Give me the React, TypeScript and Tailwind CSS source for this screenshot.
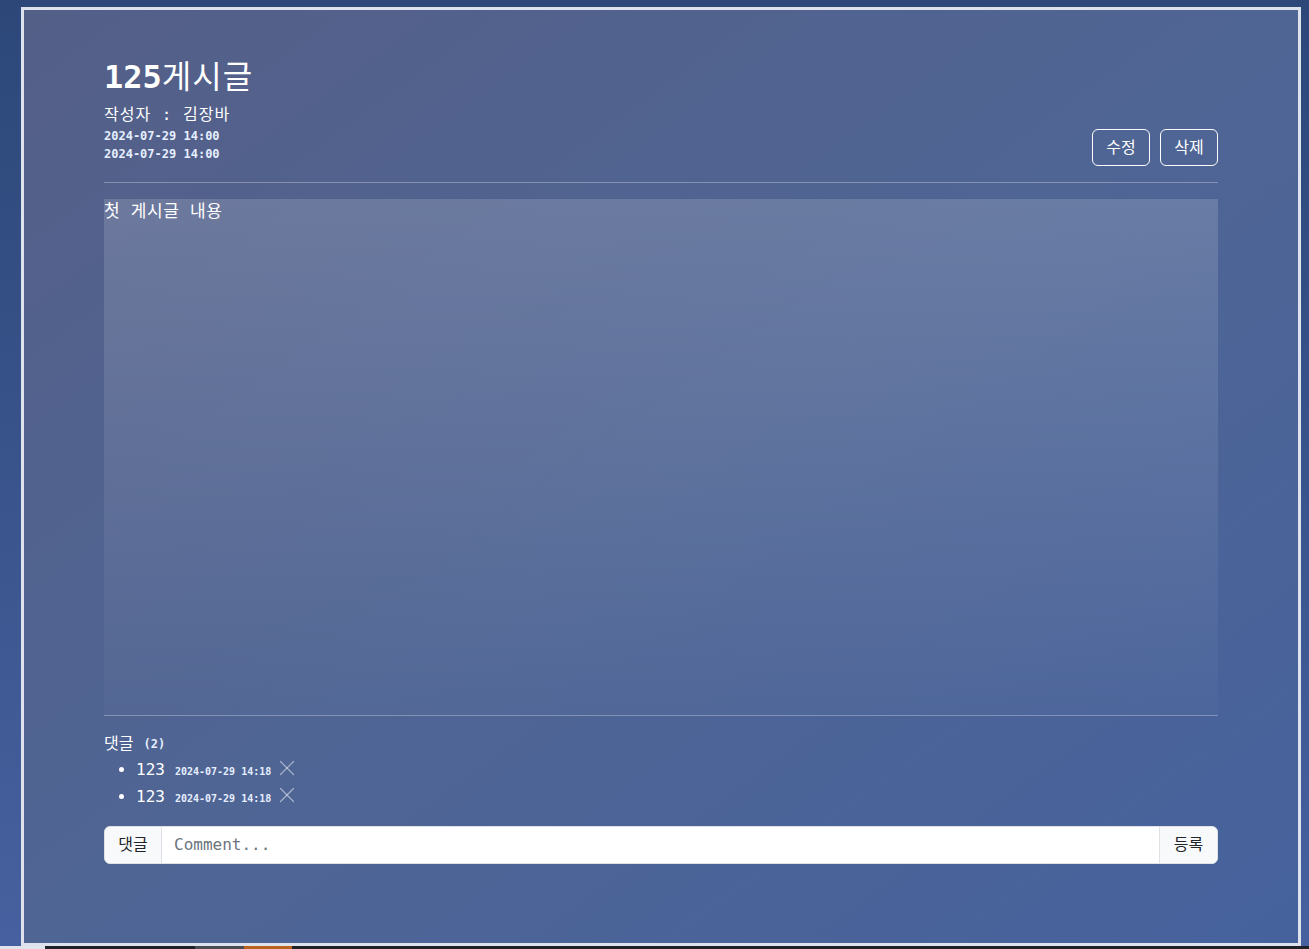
import { X } from "lucide-react";

const mono = "font-['DejaVu_Sans_Mono','Noto_Sans_CJK_KR',monospace]";

const comments = [
  { id: 1, body: "123", date: "2024-07-29 14:18" },
  { id: 2, body: "123", date: "2024-07-29 14:18" },
];

function PostHeader() {
  return (
    <div className="flex items-end justify-between">
      <div className="flex flex-col pb-[2px]">
        <h1 className="h-[40px] text-[32px] leading-[38px] text-white">
          <span className="font-bold">125</span>
          <span className="font-['Noto_Sans_CJK_KR',sans-serif] font-normal tracking-[1px]">게시글</span>
        </h1>
        <p className="mt-[8px] h-[24px] text-[16px] leading-[24px] tracking-[1px] text-white">작성자 : 김장바</p>
        <span className="h-[18px] text-[12px] font-bold leading-[18px] text-[#e6efff]">2024-07-29 14:00</span>
        <span className="h-[18px] text-[12px] font-bold leading-[18px] text-[#e6efff]">2024-07-29 14:00</span>
      </div>
      <div className="flex gap-[10px]">
        <button className="-mb-[1px] flex h-[37px] w-[58px] items-center justify-center rounded-[6px] border border-white text-[16px] text-white">
          수정
        </button>
        <button className="-mb-[1px] flex h-[37px] w-[58px] items-center justify-center rounded-[6px] border border-white text-[16px] text-white">
          삭제
        </button>
      </div>
    </div>
  );
}

function CommentList() {
  return (
    <div className="mt-[16px]">
      <p className="flex h-[24px] items-center text-[16px] text-white">
        댓글<span className="ml-[10px] text-[12px] font-bold text-[#e6efff]">(2)</span>
      </p>
      <ul className="list-disc pl-8 text-white marker:text-white">
        {comments.map((c) => (
          <li key={c.id} className="h-[27px] leading-[27px]">
            <div className="flex h-[27px] items-center">
              <span className="text-[16px]">{c.body}</span>
              <span className="ml-[10px] mt-[3px] text-[10px] font-bold text-[#e6efff]">{c.date}</span>
              <X size={26} strokeWidth={1.1} className="-my-[6px] ml-[3px] -translate-y-[2px] text-white/50" />
            </div>
          </li>
        ))}
      </ul>
    </div>
  );
}

function CommentForm() {
  return (
    <div className="mt-[16px] flex h-[38px] overflow-hidden rounded-[6px] border border-[#dee2e6] bg-white">
      <span className="flex w-[57px] items-center justify-center border-r border-[#dee2e6] bg-[#f8f9fa] text-[16px] text-[#212529]">
        댓글
      </span>
      <input
        placeholder="Comment..."
        className="flex-1 px-[12px] text-[16px] text-[#212529] outline-none placeholder:text-[#6c757d]"
      />
      <button className="flex w-[58px] items-center justify-center border-l border-[#dee2e6] bg-[#f8f9fa] text-[16px] text-[#212529]">
        등록
      </button>
    </div>
  );
}

export default function App() {
  return (
    <div className={`flex h-[949px] flex-col bg-gradient-to-b from-[#2c4778] to-[#4761a0] ${mono}`}>
      <div className="pt-[7px]">
        <div className="ml-[21px] h-[939px] w-[1280px] border-[3px] border-[#dde2ec] bg-gradient-to-br from-[#545f88] via-[#4f6594] to-[#46629d] px-[80px] pt-[45px]">
          <PostHeader />
          <hr className="mt-[17px] border-t border-white/30" />
          <div className="mt-[16px] h-[516px] bg-gradient-to-b from-white/15 to-white/[0.02] text-[17px] leading-[24px] tracking-[0.5px] text-white">
            첫 게시글 내용
          </div>
          <hr className="border-t border-white/30" />
          <CommentList />
          <CommentForm />
        </div>
      </div>
      <div className="flex h-[3px]">
        <div className="w-[45px] bg-[#e0e4ec]" />
        <div className="w-[150px] bg-[#1e2228]" />
        <div className="w-[49px] bg-[#4a4d52]" />
        <div className="w-[48px] bg-[#b8641e]" />
        <div className="flex-1 bg-[#1e2226]" />
      </div>
    </div>
  );
}
